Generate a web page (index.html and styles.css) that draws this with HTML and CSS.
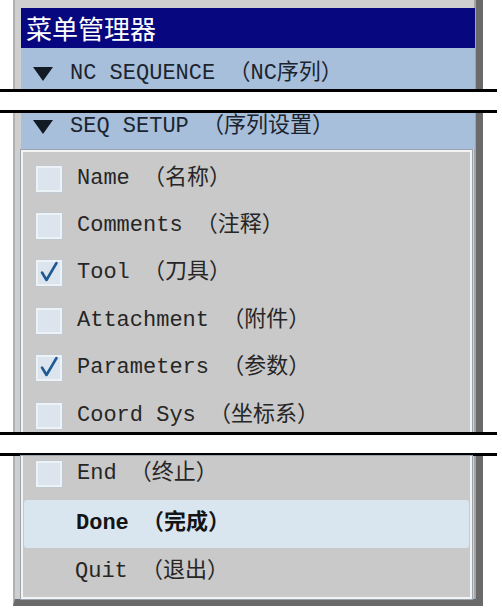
FILE: index.html
```html
<!DOCTYPE html>
<html lang="zh-CN">
<head>
<meta charset="utf-8">
<title>菜单管理器</title>
<link rel="stylesheet" href="styles.css">
</head>
<body>
<div class="page">
  <div class="frag frag-top">
    <div class="title">菜单管理器</div>
    <div class="header header-nc"><span class="tri"></span><span class="htext">NC SEQUENCE （NC序列）</span></div>
  </div>
  <div class="break"></div>
  <div class="frag frag-mid">
    <div class="header header-seq"><span class="tri"></span><span class="htext">SEQ SETUP （序列设置）</span></div>
    <div class="panel panel-top">
      <div class="row"><span class="cb"></span><span class="label">Name （名称）</span></div>
      <div class="row"><span class="cb"></span><span class="label">Comments （注释）</span></div>
      <div class="row"><span class="cb"><svg viewBox="0 0 26 26" width="26" height="26"><path d="M6 12.5 L10.5 20 L20.5 3" /></svg></span><span class="label">Tool （刀具）</span></div>
      <div class="row"><span class="cb"></span><span class="label">Attachment （附件）</span></div>
      <div class="row"><span class="cb"><svg viewBox="0 0 26 26" width="26" height="26"><path d="M6 12.5 L10.5 20 L20.5 3" /></svg></span><span class="label">Parameters （参数）</span></div>
      <div class="row"><span class="cb"></span><span class="label">Coord Sys （坐标系）</span></div>
    </div>
  </div>
  <div class="break"></div>
  <div class="frag frag-bottom">
    <div class="panel panel-bottom">
      <div class="row row-end"><span class="cb"></span><span class="label">End （终止）</span></div>
      <div class="row row-done"><span class="label bold">Done （完成）</span></div>
      <div class="row row-quit"><span class="label">Quit （退出）</span></div>
    </div>
  </div>
</div>
</body>
</html>
```

FILE: styles.css
```css
* { box-sizing: border-box; }

body {
  margin: 0;
  background: #ffffff;
  font-family: "Liberation Mono", "Noto Sans CJK SC", monospace;
  color: #262626;
}

.page {
  width: 502px;
  display: flex;
  flex-direction: column;
}

.frag {
  margin-left: 13px;
  width: 470px;
  flex: none;
  background: #cfcfcf;
  border-left: 2px solid #b2b2b2;
  border-right: 7px solid #6a6a6a;
  padding-left: 6px;
  padding-right: 1px;
  box-shadow: inset -2px 0 0 #a4a4a4;
  display: flex;
  flex-direction: column;
}

.frag > * { flex: none; }

.frag-top {
  height: 89px;
  padding-top: 8px;
}

.frag-mid {
  height: 319px;
  overflow: hidden;
}

.frag-bottom {
  height: 150px;
  border-bottom: 7px solid #6a6a6a;
}

.break {
  flex: none;
  width: 497px;
  height: 24px;
  background: #ffffff;
  border-top: 3px solid #000;
  border-bottom: 3px solid #000;
}

.title {
  height: 40px;
  background: #07077f;
  color: #ffffff;
  font-family: "Noto Sans CJK SC", sans-serif;
  font-size: 26px;
  line-height: 40px;
  padding-left: 5px;
}

.header {
  background: #a7bfda;
  display: flex;
  align-items: center;
  padding-left: 12px;
  color: #1c2430;
  font-size: 22px;
  line-height: 1;
}

.header-nc { height: 41px; padding-top: 11px; }
.header-seq { height: 36px; padding-bottom: 9px; }

.tri {
  width: 0;
  height: 0;
  border-left: 10px solid transparent;
  border-right: 10px solid transparent;
  border-top: 14px solid #121a24;
  margin-right: 17px;
}

.htext { white-space: pre; }

.panel {
  margin-right: 3px;
  background: #c9c9c9;
  border: 2px solid #f3f3f3;
  box-shadow: 0 0 0 1px #9aa4ae;
  display: flex;
  flex-direction: column;
}

.panel-top {
  margin-top: 1px;
  padding-top: 3px;
  border-bottom: 0;
}

.panel-bottom {
  border-top: 0;
  height: 143px;
}

.row {
  height: 47.4px;
  flex: none;
  display: flex;
  align-items: center;
  padding-left: 13px;
  font-size: 22px;
  line-height: 1;
}

.row-end { height: 44px; padding-bottom: 9px; }
.row-done {
  height: 48px;
  padding-left: 52px;
  background: #d9e6f0;
  border-radius: 3px;
  margin: 0 1px;
}
.row-quit { height: 49px; padding-left: 52px; padding-bottom: 2px; }

.cb {
  width: 26px;
  height: 26px;
  flex: none;
  background: #dce5ed;
  border: 2px solid #edf2f6;
  box-shadow: 0 0 0 1px #c2c9d0;
  margin-right: 15px;
  position: relative;
}

.cb svg {
  position: absolute;
  left: -2px;
  top: -2px;
}

.cb path {
  fill: none;
  stroke: #1d5a96;
  stroke-width: 2.6;
  stroke-linecap: round;
  stroke-linejoin: round;
}

.label { white-space: pre; }
.bold { font-weight: bold; color: #141414; }
```
